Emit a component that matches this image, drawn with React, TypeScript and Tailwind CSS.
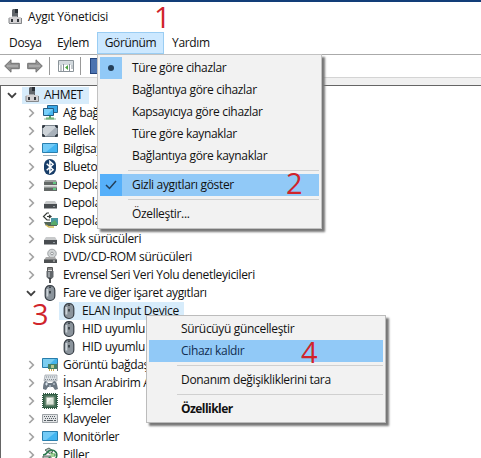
import React from "react";

type Kind = "pc" | "net" | "memory" | "monitor" | "bluetooth" | "storage" | "disk" | "volume" | "dvd" | "usb" | "mouse" | "display" | "hid" | "cpu" | "keyboard" | "battery";

function Icon({ kind }: { kind: Kind }) {
  return (
    <svg className="relative h-4 w-4 shrink-0 overflow-visible" viewBox="0 0 16 16" fill="none">
      {kind === "pc" && (
        <>
          <path d="M6 0h5v8H5V1z" fill="#62666b" />
          <path d="M8 0h3v4H8z" fill="#292e34" />
          <path d="M5 7h5v2H5z" fill="#a5a8ab" />
          <path d="M2 8h12l1 7H2z" fill="#d3d1d3" />
          <path d="M2 14.5h12.5V9M2 9v5" stroke="#85888b" />
          <path d="M4 10h2v3H4zM10 10h2v3h-2z" fill="#34383d" />
        </>
      )}
      {kind === "net" && (
        <>
          <path d="M5.5 .5h10v7h-10z" fill="#39a9e8" stroke="#28648d" />
          <path d="M1.5 3.5h10v7h-10z" fill="#48b8f2" stroke="#245c84" />
          <path d="M2 4h9L5 10H2z" fill="#78d0fa" />
          <path d="M4 13.5h8M8 11v3" stroke="#55a862" strokeWidth="2" />
          <path d="M2 14h12" stroke="#91bb98" />
        </>
      )}
      {kind === "memory" && (
        <>
          <rect x=".5" y="2.5" width="15" height="11" rx="1" fill="#a7b0b9" stroke="#7b858e" />
          <path d="M1 3h14L4 13H1z" fill="#cdd3d8" />
          <path d="M1 5V3h2M13 3h2v2M1 11v2h2M13 13h2v-2" stroke="#222a32" strokeWidth="1.5" />
        </>
      )}
      {kind === "monitor" && (
        <>
          <path d="M.5 2.5h15v9H.5z" fill="#43b5f1" stroke="#297fae" />
          <path d="M1 3h13L4 11H1z" fill="#73cbf7" />
          <path d="M1 14.5h14" stroke="#9eafb9" />
        </>
      )}
      {kind === "bluetooth" && (
        <>
          <rect x="2" y="0" width="12" height="16" rx="6" fill="#173d69" />
          <path d="M4.7 4.7l6.4 6-3.2 2.8v-11l3.2 2.8-6.4 6" stroke="white" strokeWidth="1.5" />
        </>
      )}
      {kind === "storage" && (
        <>
          <path d="M3 3h11l1 2v3H2V5z" fill="#9c9f9e" />
          <path d="M2 5h13v3H2zM2 10h13v4H2z" fill="#636866" />
          <path d="M2 8.5h13v2H2z" fill="#c1c4c3" />
          <path d="M11 6h3M11 12h3" stroke="#64e58a" strokeWidth="1.3" />
        </>
      )}
      {kind === "disk" && (
        <>
          <path d="M4 6h9l2 3H2z" fill="#c8cacb" />
          <path d="M2 9h13v4.5H2z" fill="#484c50" />
          <path d="M11 11.5h2" stroke="#90989d" />
        </>
      )}
      {kind === "volume" && (
        <>
          <path d="M7 0H5L1.5 3.5 5 7h3M5 3.5h4M7 2l2 1.5L7 5" stroke="#353b37" strokeWidth="1.2" />
          <path d="M2 9h13v4H4z" fill="#526558" />
          <path d="M9 5h7v7H9z" fill="#4d98a3" />
          <path d="M9 10l4-3 3 5H9z" fill="#5aab69" />
          <path d="M4 12l3 2h5" stroke="#d2bb54" strokeWidth="1.5" />
        </>
      )}
      {kind === "dvd" && (
        <>
          <circle cx="10" cy="4.5" r="4.3" fill="#d1d4d5" stroke="#838789" strokeWidth=".7" />
          <circle cx="10" cy="4.5" r="1.3" fill="white" stroke="#96999b" />
          <path d="M4 8h9l2 3H2z" fill="#aaa" />
          <path d="M2 10.5h13V14H2z" fill="#4d5052" />
          <path d="M11 12h2" stroke="#ccc" />
        </>
      )}
      {kind === "usb" && (
        <>
          <path d="M5.5.5h5v4h-5z" fill="#ddd" stroke="#555" />
          <path d="M7 1v2M9 1v2" stroke="#333" />
          <path d="M4.5 4h7v6l-2 2h-3l-2-2z" fill="#62676b" />
          <path d="M6 5h2v5H6z" fill="#9ba0a4" />
          <path d="M8 11v5" stroke="#36393c" strokeWidth="1.7" />
        </>
      )}
      {kind === "mouse" && (
        <>
          <rect x="3.2" y=".7" width="9.6" height="14.8" rx="4.5" fill="#8b949c" stroke="#383f46" strokeWidth="1.2" />
          <path d="M5.4 4v7.5" stroke="#ccd3d8" strokeWidth="1.8" />
          <path d="M8 1.5v7" stroke="#2e353b" strokeWidth="1.6" />
          <path d="M8 3v3" stroke="#d2d7dc" strokeWidth="1" />
        </>
      )}
      {kind === "display" && (
        <>
          <path d="M.5 1.5h15v9H.5z" fill="#45b3ea" stroke="#287dab" />
          <path d="M1 2h12L5 10H1z" fill="#7bcdf0" />
          <path d="M6 7h9v5H6z" fill="#478064" />
          <path d="M9 8h3v3H9z" fill="#b8c68e" />
          <path d="M7 13h6" stroke="#caa84e" strokeWidth="2" strokeDasharray="1 1" />
          <path d="M15.5 6v8" stroke="#606f74" />
        </>
      )}
      {kind === "hid" && (
        <>
          <path d="M3 0h12v6H2z" fill="#dbe0e4" stroke="#8b9299" strokeWidth=".6" />
          <path d="M4 2h10M3 4.5h11" stroke="#818990" strokeDasharray="1 1" />
          <path d="M1 14c0-5 1-8 3-8l2 2h4l2-2c3 0 3 4 4 8l-3 1-2-3H6l-2 3z" fill="#6b7782" />
          <path d="M3 9h3M4.5 7.5v3M8 10v3M11 9h2" stroke="#dae4ed" />
        </>
      )}
      {kind === "cpu" && (
        <>
          <path d="M1 1h14v14H1z" stroke="#315b43" strokeWidth="2" strokeDasharray="1 1" />
          <path d="M1.5 1.5h13v13h-13z" fill="#477158" stroke="#315b43" />
          <path d="M4 4h8v8H4z" fill="#dce5d9" stroke="#879b89" />
          <path d="M5 5h5L5 10z" fill="#f6f9f3" />
        </>
      )}
      {kind === "keyboard" && (
        <>
          <path d="M.5 3.5h15v8H.5z" fill="#e2e4e6" stroke="#9da2a6" />
          <path d="M2 5.5h12M3 7.5h11" stroke="#555d63" strokeDasharray="1 1" />
          <path d="M2 9.5h2M5 9.5h6M12 9.5h2" stroke="#555d63" />
        </>
      )}
      {kind === "battery" && (
        <>
          <path d="M3 3l4-2 4 3-3 3zM1 9h8v5H1z" fill="#b5c0ba" stroke="#5b6963" />
          <path d="M1 8c5 0 4-5 8-5 5 0 7 4 5 8-3 3-6 1-7-1" stroke="#28774c" strokeWidth="1.6" />
          <path d="M8 6h5v4H9z" fill="#9dd494" />
          <path d="M10 5v2M12 8h3" stroke="#377348" />
        </>
      )}
    </svg>
  );
}

function Chevron({ open = false }: { open?: boolean }) {
  return (
    <svg className="h-3 w-3 shrink-0" viewBox="0 0 12 12" fill="none" stroke={open ? "#404040" : "#a3a3a3"} strokeWidth={open ? 1.9 : 1.7}>
      <path d={open ? "M2 4.2l4 4 4-4" : "M4.3 2l4 4-4 4"} />
    </svg>
  );
}

function Arrow({ right = false }: { right?: boolean }) {
  return (
    <svg className={right ? "h-4 w-4 -scale-x-100" : "h-4 w-4"} viewBox="0 0 16 16">
      <path d="M.7 8L7 1.8v3.5h8.3v5.4H7v3.5z" fill="#929292" stroke="#717171" />
      <path d="M3 8h11" stroke="#a9a9a9" strokeWidth="2" />
    </svg>
  );
}

const rows: [Kind, string][] = [
  ["net", "Ağ bağdaştırıcıları"], ["memory", "Bellek teknolojisi aygıtları"], ["monitor", "Bilgisayar"],
  ["bluetooth", "Bluetooth"], ["storage", "Depolama denetleyicileri"], ["disk", "Depolama birimleri"],
  ["volume", "Depolama birimi gölge kopyaları"], ["disk", "Disk sürücüleri"], ["dvd", "DVD/CD-ROM sürücüleri"],
  ["usb", "Evrensel Seri Veri Yolu denetleyicileri"],
];
const tail: [Kind, string][] = [
  ["display", "Görüntü bağdaştırıcıları"], ["hid", "İnsan Arabirim Aygıtları"], ["cpu", "İşlemciler"],
  ["keyboard", "Klavyeler"], ["monitor", "Monitörler"], ["battery", "Piller"],
];

function TreeRow({ kind, label, open = false }: { kind: Kind; label: string; open?: boolean }) {
  return (
    <div className="flex h-[18px] shrink-0 items-center pl-6">
      <Chevron open={open} />
      <span className="ml-[5px] flex"><Icon kind={kind} /></span>
      <span className="ml-[5px]">{label}</span>
    </div>
  );
}

function MenuItem({ children }: { children: React.ReactNode }) {
  return <div className="flex h-[22px] shrink-0 items-center pl-8">{children}</div>;
}

export default function App() {
  return (
    <main className="relative flex h-[458px] w-[481px] flex-col overflow-hidden border-t-2 border-[#123d78] bg-white font-['Open_Sans','Noto_Sans',sans-serif] text-[12px] leading-[18px] tracking-[-0.33px] whitespace-nowrap text-[#111]">
      <header className="flex h-[30px] shrink-0 items-center pl-[7px] tracking-[-0.2px]">
        <Icon kind="pc" /><span className="ml-[5px]">Aygıt Yöneticisi</span>
      </header>
      <nav className="flex h-[22px] shrink-0 items-center">
        <span className="w-12 pl-[9px]">Dosya</span>
        <span className="w-[49px] pl-[9px]">Eylem</span>
        <span className="flex h-[22px] w-[67px] items-center justify-center border border-[#9acdf3] bg-[#cce8ff]">Görünüm</span>
        <span className="pl-[8px]">Yardım</span>
      </nav>
      <div className="flex h-6 shrink-0 items-center border-y border-t-[#aaa] border-b-[#d4d4d4] pl-1">
        <Arrow /><span className="ml-[7px]"><Arrow right /></span>
        <span className="ml-[6px] h-[18px] w-px bg-[#999]" />
        <svg className="ml-2 h-4 w-4" viewBox="0 0 16 16" fill="none">
          <path d="M.5 2.5h15v11H.5z" fill="white" stroke="#8a9399" />
          <path d="M1 4h14M1 6h14" stroke="#a6b3bc" />
          <path d="M5.5 6v7M11.5 6v7M2 8h2M2 10h2M2 12h2M13 8h2M13 10h2" stroke="#87929a" />
          <path d="M10 7v5L7 9.5z" fill="#48a33e" />
        </svg>
        <span className="ml-[6px] h-[18px] w-px bg-[#999]" />
        <span className="ml-[9px] h-4 w-4 border border-[#25457d] bg-[#4c73b0]" />
      </div>
      <div className="h-[7px] shrink-0 bg-[#f0f0f0]" />
      <section className="flex min-h-0 flex-1 flex-col border-t border-l border-[#656565]">
        <div className="flex h-[18px] shrink-0 items-center pl-[5px]">
          <Chevron open />
          <span className="ml-[4px] flex h-[17px] w-[67px] items-center bg-[#d7ecfb] pl-[2px]"><Icon kind="pc" /><span className="ml-[4px]">AHMET</span></span>
        </div>
        {rows.map(([kind, label], i) => <TreeRow key={i} kind={kind} label={label} />)}
        <TreeRow kind="mouse" label="Fare ve diğer işaret aygıtları" open />
        {["ELAN Input Device", "HID uyumlu fare", "HID uyumlu fare"].map((label, i) => (
          <div key={i} className="flex h-[18px] shrink-0 items-center pl-[58px]">
            <div className={i === 0 ? "flex h-[18px] w-[125px] items-center bg-[#d7ecfb] pl-[2px]" : "flex items-center pl-[2px]"}>
              <Icon kind="mouse" /><span className="ml-[5px]">{label}</span>
            </div>
          </div>
        ))}
        {tail.map(([kind, label]) => <TreeRow key={label} kind={kind} label={label} />)}
      </section>

      <div className="absolute top-[52px] left-[97px] flex h-[175px] w-[225px] flex-col border border-[#c2c2c2] bg-[#f2f2f2] pt-[2px] pr-[2px] pl-[2px] shadow-[3px_3px_2px_#777]">
        <div className="flex h-[22px] items-center"><span className="flex h-[22px] w-[22px] items-center justify-center bg-[#91c9f7]"><i className="h-[6px] w-[6px] rounded-full bg-[#243f59]" /></span><span className="pl-[10px]">Türe göre cihazlar</span></div>
        <MenuItem>Bağlantıya göre cihazlar</MenuItem>
        <MenuItem>Kapsayıcıya göre cihazlar</MenuItem>
        <MenuItem>Türe göre kaynaklar</MenuItem>
        <MenuItem>Bağlantıya göre kaynaklar</MenuItem>
        <hr className="mt-[3px] mb-[3px] ml-7 border-[#d0d0d0]" />
        <div className="flex h-[22px] items-center bg-[#91c9f7]"><span className="flex h-[22px] w-[22px] items-center justify-center bg-[#56b0fa]"><svg className="h-3 w-3" viewBox="0 0 12 12"><path d="M1 6l3.5 3.5L11 2" fill="none" stroke="#243f59" strokeWidth="1.5" /></svg></span><span className="pl-[10px]">Gizli aygıtları göster</span></div>
        <hr className="mt-[3px] mb-[3px] ml-7 border-[#d0d0d0]" />
        <MenuItem>Özelleştir...</MenuItem>
      </div>

      <div className="absolute top-[313px] left-[146px] flex h-[108px] w-[240px] flex-col border border-[#bcbcbc] bg-[#f2f2f2] p-[2px] shadow-[3px_3px_2px_#777]">
        <MenuItem>Sürücüyü güncelleştir</MenuItem>
        <div className="bg-[#91c9f7] text-[#122e51]"><MenuItem>Cihazı kaldır</MenuItem></div>
        <hr className="my-[3px] ml-7 border-[#d0d0d0]" />
        <MenuItem>Donanım değişikliklerini tara</MenuItem>
        <hr className="my-[3px] ml-7 border-[#d0d0d0]" />
        <MenuItem><b className="tracking-[-0.55px]">Özellikler</b></MenuItem>
      </div>
      <span className="absolute top-0 left-[154px] text-[29px] leading-[30px] text-[#d0242b]">1</span>
      <span className="absolute top-[166px] left-[286px] text-[29px] leading-[30px] text-[#d0242b]">2</span>
      <span className="absolute top-[297px] left-[32px] text-[29px] leading-[30px] text-[#d0242b]">3</span>
      <span className="absolute top-[335px] left-[301px] text-[29px] leading-[30px] text-[#d0242b]">4</span>
    </main>
  );
}
